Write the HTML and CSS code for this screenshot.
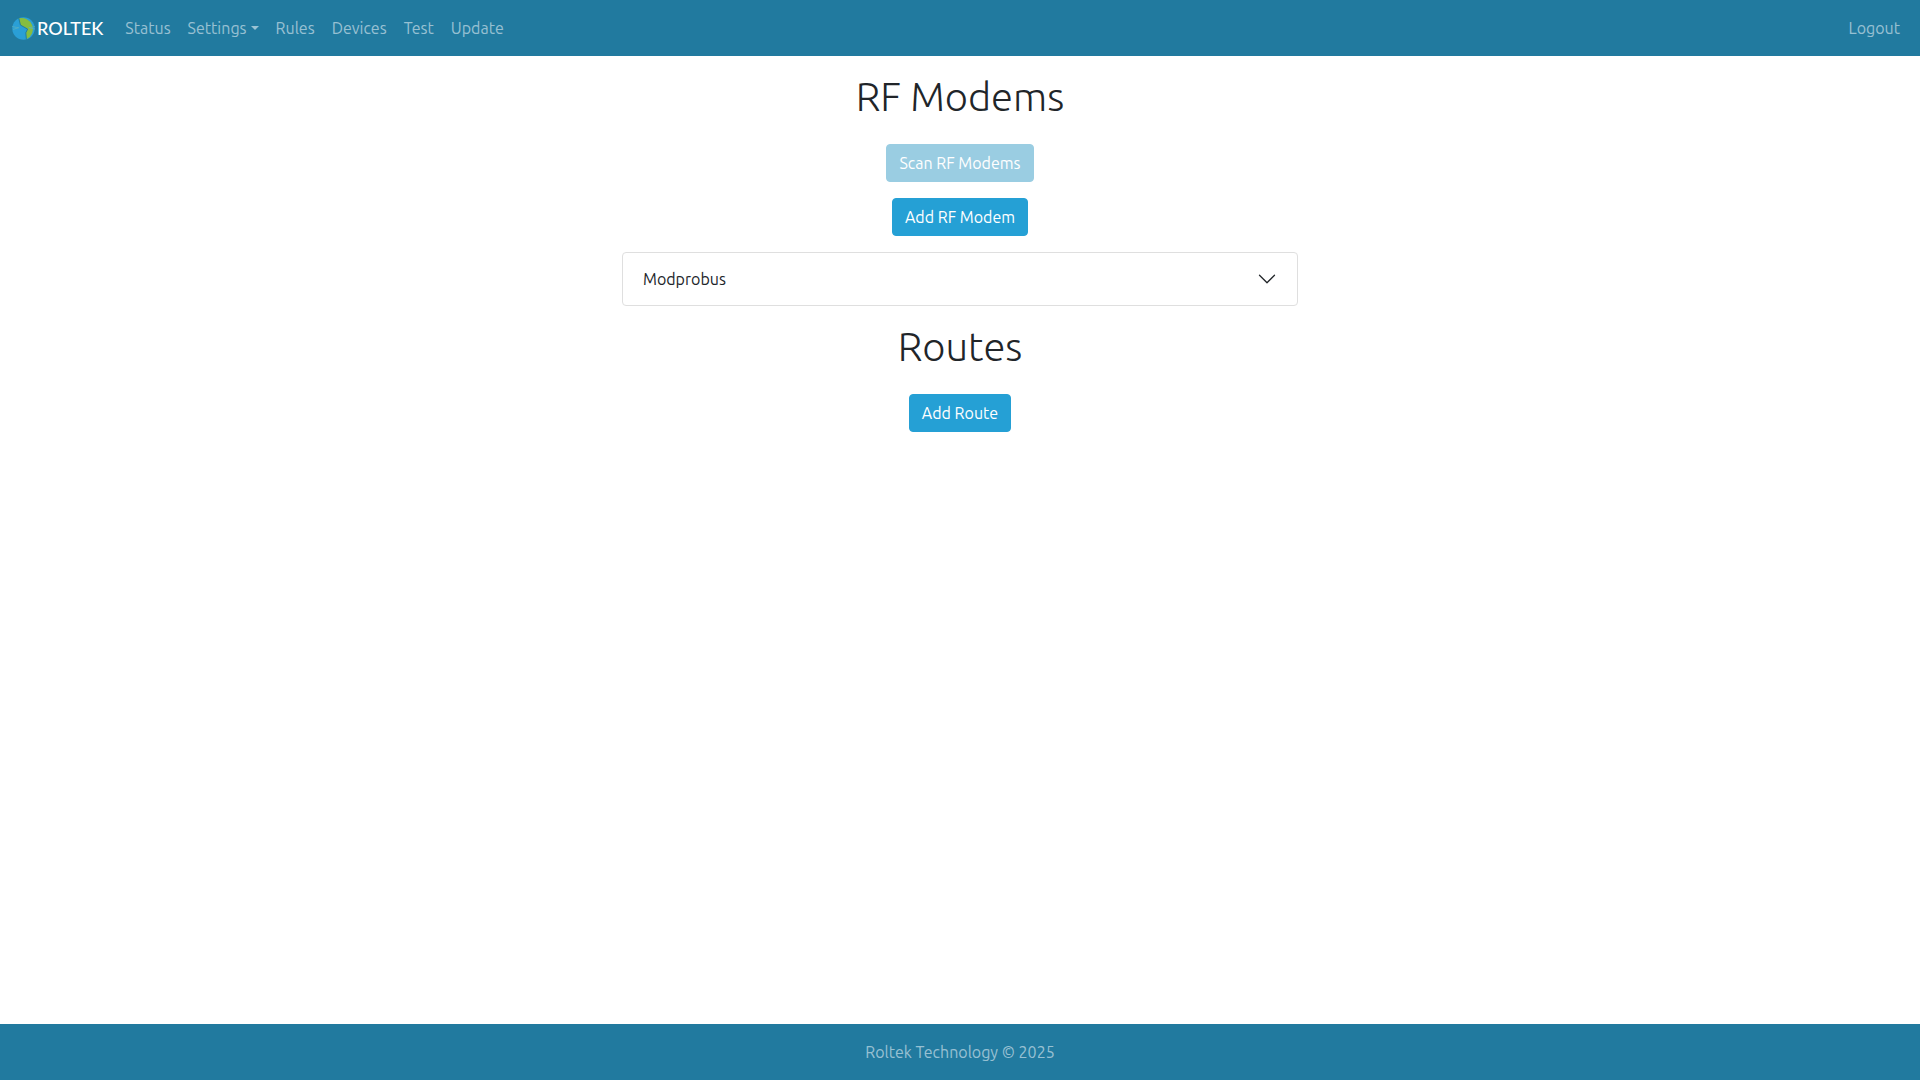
FILE: index.html
```
<!DOCTYPE html>
<html lang="en">
<head>
    <meta charset="utf-8">
    <meta name="viewport" content="width=device-width, initial-scale=1">
    <title>RF Modems</title>
    <link rel="stylesheet" href="styles.css">
</head>
<body>
<nav class="navbar">
    <a class="navbar-brand" href="#" aria-label="Roltek">
        <svg class="brand-mark" viewBox="0 0 24 24" aria-hidden="true">
            <circle cx="12" cy="12" r="11.7" fill="#2a9fd6"/>
            <path d="M7 1.4A11.7 11.7 0 0 1 15 23.3L14.4 16.5L16.3 12.6L8.8 8.4Z" fill="#86bd40"/>
            <path d="M7 1L8.8 8.4L16.3 12.6L14.4 16.5L15 23.5" fill="none" stroke="#217a9f" stroke-width="1"/>
            <path d="M0 10L7 11.2L1 13M24 10L17.5 11.2L24 12.6" fill="none" stroke="#5fb3bd" stroke-width=".7"/>
        </svg>
        <span class="brand-name">ROLTEK</span>
    </a>
    <ul class="navbar-nav">
        <li><a class="nav-link" href="#">Status</a></li>
        <li><a class="nav-link dropdown-toggle" href="#">Settings</a></li>
        <li><a class="nav-link" href="#">Rules</a></li>
        <li><a class="nav-link" href="#">Devices</a></li>
        <li><a class="nav-link" href="#">Test</a></li>
        <li><a class="nav-link" href="#">Update</a></li>
    </ul>
    <a class="nav-link" href="#">Logout</a>
</nav>
<main class="content">
    <h1>RF Modems</h1>
    <button type="button" class="btn" disabled>Scan RF Modems</button>
    <button type="button" class="btn">Add RF Modem</button>
    <div class="accordion">
        <button type="button" class="accordion-button" aria-expanded="false">
            Modprobus
            <svg class="chevron" viewBox="0 0 16 16" aria-hidden="true">
                <path fill="#212529" fill-rule="evenodd" d="M1.646 4.646a.5.5 0 0 1 .708 0L8 10.293l5.646-5.647a.5.5 0 0 1 .708.708l-6 6a.5.5 0 0 1-.708 0l-6-6a.5.5 0 0 1 0-.708z"/>
            </svg>
        </button>
    </div>
    <h1>Routes</h1>
    <button type="button" class="btn">Add Route</button>
</main>
<footer class="footer">Roltek Technology © 2025</footer>
</body>
</html>
```
FILE: styles.css
```
* {
    box-sizing: border-box;
}
body {
    display: flex;
    flex-direction: column;
    min-height: 100vh;
    margin: 0;
    font-family: Ubuntu, "Noto Sans", sans-serif;
    font-size: 16px;
    line-height: 24px;
    color: #212529;
    background: #fff;
}
button {
    font: inherit;
}
.navbar {
    display: flex;
    align-items: center;
    min-height: 56px;
    padding: 0 12px;
    background: #217a9f;
}
.navbar-brand {
    display: flex;
    align-items: center;
    gap: 2px;
    margin-right: 14px;
    color: #fff;
    text-decoration: none;
}
.brand-mark {
    width: 23px;
    height: 23px;
}
.brand-name {
    font-family: Lato, sans-serif;
    font-size: 18px;
    font-weight: 500;
}
.navbar-nav {
    display: flex;
    flex: 1;
    gap: 1px;
    margin: 0;
    padding: 0;
    list-style: none;
}
.nav-link {
    display: block;
    padding: 8px;
    color: rgba(255, 255, 255, .55);
    text-decoration: none;
}
.dropdown-toggle::after {
    content: "";
    display: inline-block;
    margin-left: 4px;
    vertical-align: 4px;
    border-top: 4px solid;
    border-right: 4px solid transparent;
    border-left: 4px solid transparent;
}
.content {
    display: flex;
    flex: 1;
    flex-direction: column;
    align-items: center;
    gap: 16px;
    padding: 16px 12px;
}
h1 {
    margin: 0 0 6px;
    font-size: 40px;
    font-weight: 300;
    line-height: 50px;
}
.btn {
    padding: 6px 12px;
    border: 1px solid #25a0d5;
    border-radius: 4px;
    color: #fff;
    background: #25a0d5;
}
.btn:disabled {
    border-color: #9acde2;
    background: #9acde2;
}
.accordion {
    width: 100%;
    max-width: 676px;
    border: 1px solid #dfdfdf;
    border-radius: 4px;
}
.accordion-button {
    display: flex;
    align-items: center;
    justify-content: space-between;
    width: 100%;
    padding: 16px 20px;
    border: 0;
    line-height: 20px;
    color: #212529;
    background: none;
}
.chevron {
    width: 20px;
    height: 20px;
}
.footer {
    padding: 16px;
    text-align: center;
    color: rgba(255, 255, 255, .55);
    background: #217a9f;
}
```
